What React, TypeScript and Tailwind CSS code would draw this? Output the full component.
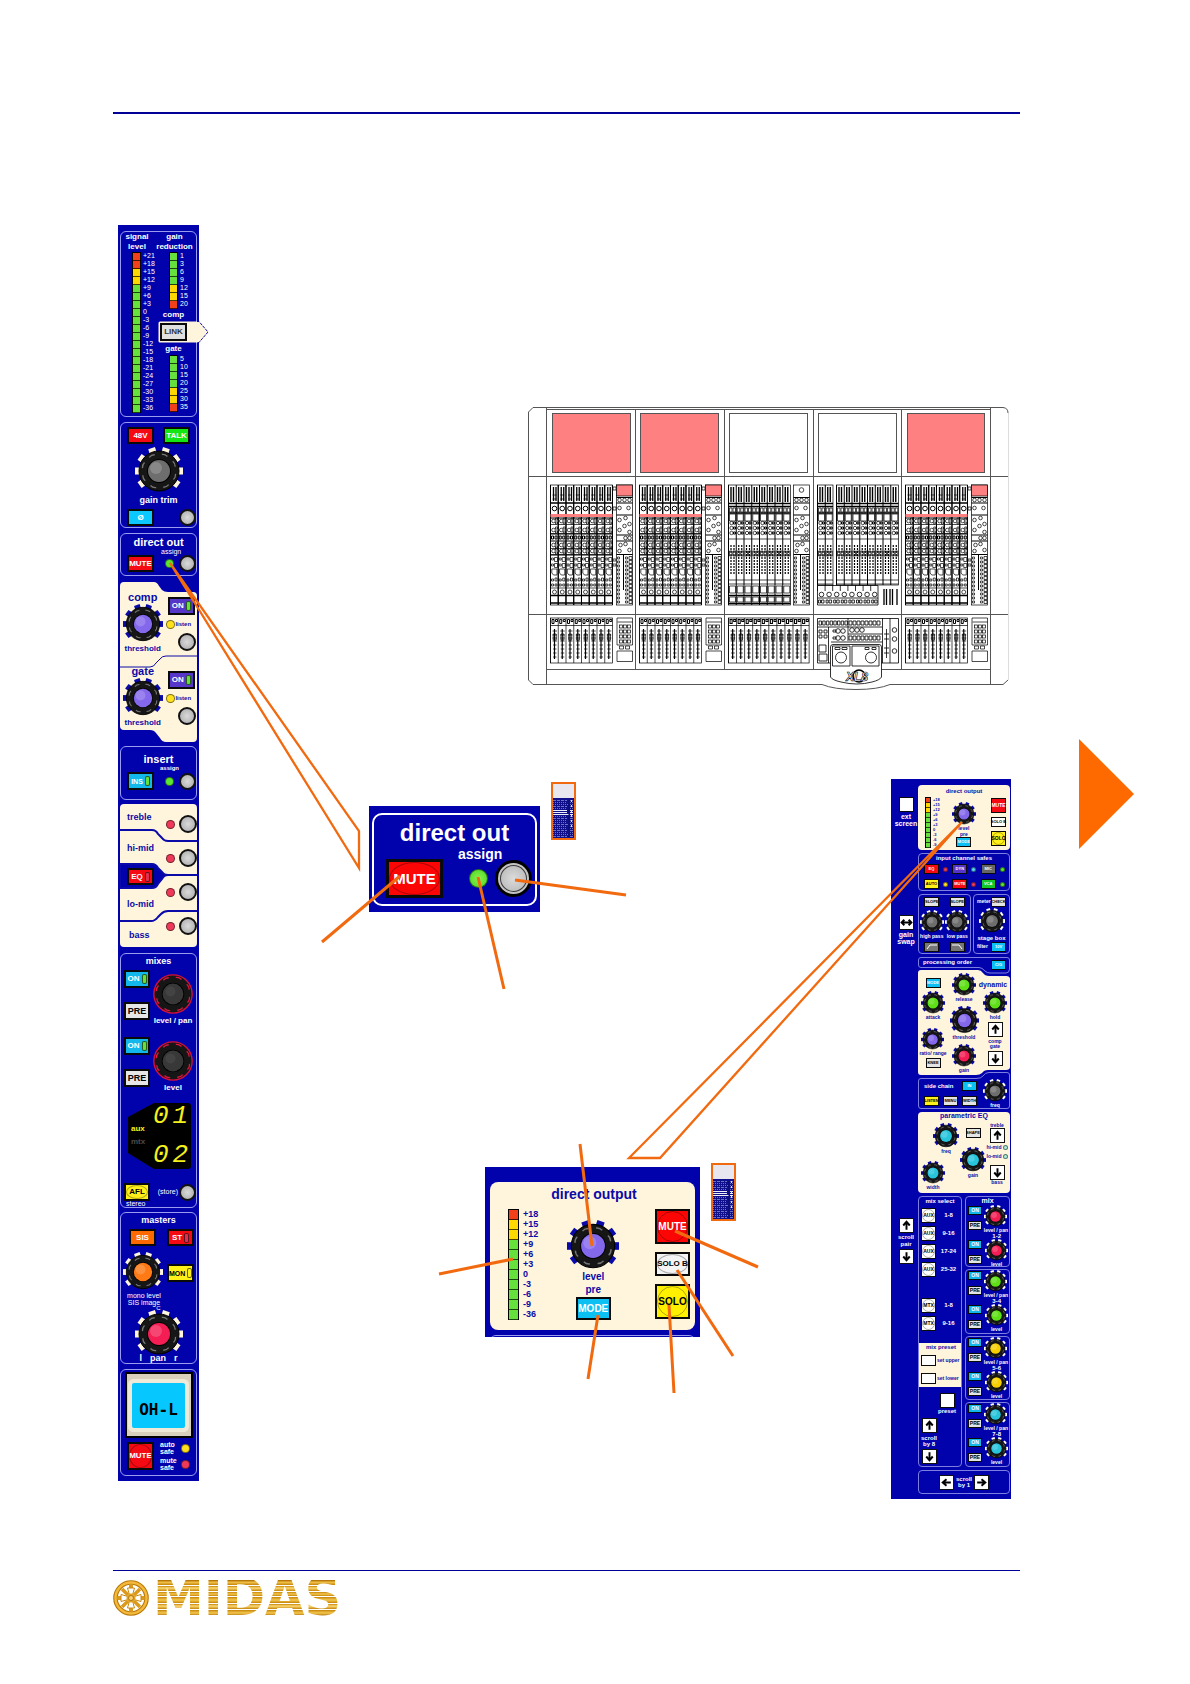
import type { ReactNode } from "react";
import clsx from "clsx";

const RED = "#f2401a";
const YELLOW = "#ffd800";
const GREEN = "#66e03c";

type MeterProps = { labels: string[]; reds: number; yellows: number; flip?: boolean; size?: "sm" | "md" | "xs" };

function Meter({ labels, reds, yellows, flip = false, size = "sm" }: MeterProps) {
  const segment = (i: number) => {
    const n = flip ? labels.length - 1 - i : i;
    if (n < reds) return RED;
    return n < reds + yellows ? YELLOW : GREEN;
  };
  return (
    <div className={clsx("flex", size === "md" ? "gap-1" : "gap-[2px]")}>
      <div className={clsx("flex shrink-0 flex-col bg-black px-px pt-px", size === "sm" && "w-[9px]", size === "md" && "w-[11px]", size === "xs" && "w-[6px]")}>
        {labels.map((l, i) => (
          <span
            key={l}
            style={{ backgroundColor: segment(i) }}
            className={clsx("block border-b border-black/70", size === "sm" && "h-2", size === "md" && "h-[10px]", size === "xs" && "h-[5px] border-black/40")}
          />
        ))}
      </div>
      <div className={clsx(size === "sm" && "text-[7px] leading-[8px]", size === "md" && "text-[9px] leading-[10px] font-bold", size === "xs" && "text-[4px] leading-[5px] font-bold")}>
        {labels.map((l) => (
          <div key={l}>{l}</div>
        ))}
      </div>
    </div>
  );
}

type KnobProps = { cap: string; tick?: string; red?: boolean; className: string };

function Knob({ cap, tick = "#fff5dc", red = false, className }: KnobProps) {
  return (
    <svg viewBox="-24 -24 48 48" className={clsx("shrink-0", className)}>
      {!red &&
        [-126, -90, -54, -18, 18, 54, 90, 126].map((a) => (
          <rect key={a} x="-3.5" y="-24" width="7" height="6" fill={tick} transform={`rotate(${a})`} />
        ))}
      <circle r={red ? 23 : 20} fill="#161616" stroke={red ? "#d8103c" : "#000"} strokeWidth={red ? 1.6 : 1} />
      {[0, 45, 90, 135, 180, 225, 270, 315].map((a) => (
        <path key={a} d="M-3 -16.5 Q0 -18 3 -16.5" fill="none" stroke={red ? "#e01840" : "#777"} strokeWidth="1.3" transform={`rotate(${a + 20}) ${red ? "scale(1.2)" : ""}`} />
      ))}
      <circle r={red ? 13.5 : 12} fill="#000" />
      <circle r={red ? 12.5 : 11} fill={cap} />
      <circle cx="-3" cy="-3" r="6" fill="#fff" opacity={red ? 0.06 : 0.18} />
    </svg>
  );
}

type BtnProps = { children?: ReactNode; label?: string; ring?: boolean; led?: string; className: string };

function Btn({ children, label, ring = false, led, className }: BtnProps) {
  return (
    <button
      type="button"
      aria-label={label}
      className={clsx("relative flex shrink-0 items-center justify-center gap-[2px] border-[#0a0a0a] font-bold leading-none whitespace-nowrap", className)}
    >
      {ring && <span className="absolute inset-0 rounded-[50%] border border-black/30" />}
      <span>{children}</span>
      {led && <span style={{ backgroundColor: led }} className="block h-[10px] w-[5px] rounded-xs border border-black/60" />}
    </button>
  );
}

function Round({ label, className = "size-[17px] border-2" }: { label: string; className?: string }) {
  return (
    <button type="button" aria-label={label} className={clsx("shrink-0 rounded-full border-[#111] bg-radial from-[#dadada] to-[#a8a8a8]", className)} />
  );
}

function Led({ className }: { className: string }) {
  return <span className={clsx("block shrink-0 rounded-full border border-black/50", className)} />;
}

const CARD = "rounded-md border border-[#9a9cf0]";
const KEY = "h-[17px] w-[27px] border-2 text-[8px]";

/* ---------- input channel strip ---------- */

function Dynamics({ title }: { title: string }) {
  return (
    <div className="flex h-[74px]">
      <div className="flex w-[46px] flex-col items-center">
        <span className="text-[11px] leading-[14px] font-bold">{title}</span>
        <Knob cap="#8468ec" tick="#0a0aa8" className="size-10" />
        <span className="text-[8px] leading-[10px] font-bold">threshold</span>
      </div>
      <div className="flex w-8 flex-col items-center pt-[7px]">
        <Btn led={GREEN} className="h-[18px] w-[27px] border-2 bg-[#5636c8] text-[8px] text-white">ON</Btn>
        <div className="flex h-[18px] w-full items-center pl-px">
          <Led className="size-[9px] bg-[#ffe11e]" />
          <span className="text-[6px] font-bold">listen</span>
        </div>
        <div className="flex w-full justify-end pr-px">
          <Round label={`${title} listen`} className="size-[18px] border-2" />
        </div>
      </div>
    </div>
  );
}

function SendKnob({ label }: { label: string }) {
  return (
    <div className="flex h-[67px] pl-[3px] text-white">
      <div className="flex flex-col gap-[14px]">
        <Btn led={GREEN} className="h-[18px] w-[26px] border-2 bg-[#12b8ec] text-[8px]">ON</Btn>
        <Btn className="h-[18px] w-[26px] border-2 bg-[#e6e6e6] text-[9px] text-black">PRE</Btn>
      </div>
      <div className="flex w-[49px] flex-col items-center pt-1">
        <Knob red cap="#383838" className="size-10" />
        <span className="pt-[2px] text-[8px] leading-[10px] font-bold whitespace-nowrap">{label}</span>
      </div>
    </div>
  );
}

function ChannelStrip() {
  return (
    <section aria-label="Input channel strip" className="ml-[5px] flex w-[81px] shrink-0 flex-col self-start bg-[#0202ac] px-[2px] pt-[6px] pb-[5px] text-white">
      <div className={clsx(CARD, "flex h-[186px]")}>
        <div className="w-8">
          <p className="text-center text-[8px] leading-[10px] font-bold">signal<br />level</p>
          <div className="pl-[11px]">
            <Meter reds={2} yellows={2} labels={["+21", "+18", "+15", "+12", "+9", "+6", "+3", "0", "-3", "-6", "-9", "-12", "-15", "-18", "-21", "-24", "-27", "-30", "-33", "-36"]} />
          </div>
        </div>
        <div className="w-11">
          <p className="text-center text-[8px] leading-[10px] font-bold">gain<br />reduction</p>
          <div className="pl-4">
            <Meter flip reds={1} yellows={2} labels={["1", "3", "6", "9", "12", "15", "20"]} />
          </div>
          <p className="pr-[2px] text-center text-[8px] leading-3 font-bold">comp</p>
          <div className="relative h-[22px] pt-[2px] pl-[7px]">
            <svg viewBox="0 0 51 22" className="absolute top-0 left-[5px] h-[22px] w-[51px]">
              <path d="M2 0.5 H41 L50 11 L41 21.5 H2 Q0.5 21.5 0.5 20 V2 Q0.5 0.5 2 0.5Z" fill="#fff5dc" />
              <path d="M39 0.5 H41 L50 11 L41 21.5 H39" fill="none" stroke="#0a0aa8" strokeDasharray="3 1" />
            </svg>
            <Btn className="h-[18px] w-[27px] border-2 bg-[#e0e0e0] text-[8px] text-[#333]">LINK</Btn>
          </div>
          <p className="pr-[2px] text-center text-[8px] leading-3 font-bold">gate</p>
          <div className="pl-4">
            <Meter flip reds={1} yellows={2} labels={["5", "10", "15", "20", "25", "30", "35"]} />
          </div>
        </div>
      </div>

      <div className={clsx(CARD, "mt-[5px] flex h-[106px] flex-col items-center pt-1")}>
        <div className="flex w-full justify-between px-[6px]">
          <Btn className={clsx(KEY, "bg-[#f50a14]")}>48V</Btn>
          <Btn className={clsx(KEY, "bg-[#14e614]")}>TALK</Btn>
        </div>
        <Knob cap="#6e6e6e" className="mt-[3px] size-12" />
        <span className="text-[9px] leading-[10px] font-bold">gain trim</span>
        <div className="flex w-full justify-between pt-1 pl-[6px]">
          <Btn className={clsx(KEY, "bg-[#0cc8ff]")}>Ø</Btn>
          <Round label="gain trim select" />
        </div>
      </div>

      <div className={clsx(CARD, "mt-[5px] h-[43px]")}>
        <p className="pt-[2px] text-center text-[11px] leading-3 font-bold">direct out</p>
        <p className="pl-10 text-[7px] leading-[7px]">assign</p>
        <div className="flex items-center pl-[6px]">
          <Btn className={clsx(KEY, "bg-[#f50a14]")}>MUTE</Btn>
          <Led className="ml-[11px] size-[9px] bg-[#5ce632]" />
          <Round label="direct out assign" className="ml-auto size-[17px] border-2" />
        </div>
      </div>

      <div className="relative mt-[6px] h-[160px] pt-2 text-[#0a0aa8]">
        <svg viewBox="0 0 77 160" className="absolute inset-0 size-full">
          <path d="M0 4 Q0 0 4 0 H34 Q37 0 39 4 L42 8 Q44 10 48 10 H73 Q77 10 77 14 V156 Q77 160 73 160 H46 Q42 160 40 156 L36 151 Q34 148 30 148 H4 Q0 148 0 144Z" fill="#fff5dc" />
          <path d="M0 85 H30 Q34 85 36 81 L40 77 Q42 74 46 74 H77" fill="none" stroke="#0a0aa8" />
        </svg>
        <div className="relative">
          <Dynamics title="comp" />
          <Dynamics title="gate" />
        </div>
      </div>

      <div className={clsx(CARD, "mt-1 h-[54px]")}>
        <p className="pt-[6px] text-center text-[11px] leading-3 font-bold">insert</p>
        <p className="pl-[39px] text-[6px] leading-[7px] font-bold">assign</p>
        <div className="flex items-center pl-[6px]">
          <Btn led={GREEN} className="h-[18px] w-[27px] border-2 bg-[#12b8ec] text-[7px]">INS</Btn>
          <Led className="ml-[11px] size-[9px] bg-[#5ce632]" />
          <Round label="insert assign" className="ml-auto size-[17px] border-2" />
        </div>
      </div>

      <div className="relative mt-1 h-[143px] text-[9px] font-bold text-[#0a0aa8]">
        <svg viewBox="0 0 77 143" className="absolute inset-0 size-full">
          <rect width="77" height="143" rx="4" fill="#fff5dc" />
          <g fill="none" stroke="#0a0aa8" strokeWidth="2">
            <path d="M0 26 H32 Q36 26 38 30 L42 34 Q44 37 48 37 H77" />
            <path d="M0 117 H31 Q35 117 38 113 L41 110 Q44 107 48 107 H77" />
            <path d="M0 60 H32 Q36 60 38 64 L42 68 Q44 71 48 71 H77 H48 Q44 71 42 75 L38 80 Q36 84 32 84 H0Z" fill="#0202ac" />
          </g>
        </svg>
        <div className="relative flex">
          <div className="flex w-[46px] flex-col pl-[7px]">
            <span className="h-7 leading-[26px]">treble</span>
            <span className="h-9 leading-8">hi-mid</span>
            <Btn led="#e03050" className={clsx(KEY, "bg-[#f50a14] text-white")}>EQ</Btn>
            <span className="h-9 leading-[38px]">lo-mid</span>
            <span className="h-6 pl-[2px] leading-7">bass</span>
          </div>
          <div className="flex flex-col gap-4 pt-[11px]">
            {["treble", "hi-mid", "lo-mid", "bass"].map((band) => (
              <div key={band} className="flex items-center gap-1">
                <Led className="size-[9px] bg-[#ee3a58]" />
                <Round label={band} className="size-[18px] border-2" />
              </div>
            ))}
          </div>
        </div>
      </div>

      <div className={clsx(CARD, "mt-[6px] h-[255px]")}>
        <p className="pt-px pb-[3px] text-center text-[9px] leading-3 font-bold">mixes</p>
        <SendKnob label="level / pan" />
        <SendKnob label="level" />
        <div className="relative -mt-px ml-[7px] h-[67px] w-16">
          <svg viewBox="0 0 64 67" className="absolute inset-0 size-full">
            <path d="M26 0 H60 Q63 0 63 3 V63 Q63 66 60 66 H26 L0 50 V14Z" fill="#000" />
          </svg>
          <div className="relative flex font-bold">
            <div className="w-[25px] pt-[19px] pl-[3px] text-[8px] leading-[13px]">
              <p className="text-[#f4f01c]">aux</p>
              <p className="text-[#4a4a4a]">mtx</p>
            </div>
            <div className="font-['Liberation_Mono',monospace] text-[26px] leading-[26px] font-normal text-[#f4f01c] italic">
              <p className="flex h-[39px] gap-1"><span>0</span><span>1</span></p>
              <p className="flex gap-1"><span>0</span><span>2</span></p>
            </div>
          </div>
        </div>
        <div className="mt-[13px] flex items-center pl-[3px]">
          <Btn ring className="h-[18px] w-[26px] border-2 bg-[#fff01a] text-[8px] text-black">AFL</Btn>
          <span className="ml-auto pr-px text-[7px]">(store)</span>
          <Round label="store" />
        </div>
        <p className="pl-[5px] text-[7px] leading-[6px]">stereo</p>
      </div>

      <div className={clsx(CARD, "mt-1 h-[152px]")}>
        <p className="pt-px text-center text-[9px] leading-3 font-bold">masters</p>
        <div className="flex justify-between pt-[3px] pr-[2px] pl-2">
          <Btn className={clsx(KEY, "bg-[#ff6a00]")}>SIS</Btn>
          <Btn led="#e03050" className={clsx(KEY, "bg-[#f50a14]")}>ST</Btn>
        </div>
        <div className="flex items-start justify-between pt-[6px] pr-[2px] pl-[2px]">
          <Knob cap="#ff7a14" className="size-10" />
          <Btn led="#fff01a" className="mt-3 h-[18px] w-[27px] border-2 bg-[#fff01a] text-[7px] text-black">MON</Btn>
        </div>
        <p className="w-[46px] text-center text-[7px] leading-[7px] whitespace-nowrap">mono level<br />SIS image</p>
        <p className="text-center text-[6px] leading-[4px]">C</p>
        <Knob cap="#f41e54" className="mx-auto size-12" />
        <p className="-mt-[5px] flex justify-center gap-2 text-[9px] leading-[10px] font-bold">
          <span>l</span><span>pan</span><span>r</span>
        </p>
      </div>

      <div className={clsx(CARD, "mt-[5px] h-[107px] pt-[3px]")}>
        <div className="mx-auto flex h-16 w-[66px] items-center justify-center border border-black bg-[#d8d0bc] outline-1 outline-black">
          <span className="flex h-[45px] w-[53px] items-end justify-center rounded-xs bg-[#06c8ff] pb-2 font-['DejaVu_Sans_Mono',monospace] text-[16px] leading-5 font-bold text-black ring-4 ring-[#efe9d8]">OH-L</span>
        </div>
        <div className="flex items-center pt-1 pl-[6px]">
          <Btn ring className="h-7 w-[27px] border-2 bg-[#f50a14] text-[8px]">MUTE</Btn>
          <div className="w-6 pl-[6px] text-[7px] leading-[7px] font-bold">
            <p>auto<br />safe</p>
            <p className="pt-[2px]">mute<br />safe</p>
          </div>
          <div className="flex flex-col gap-[7px] pl-[3px]">
            <Led className="size-[9px] bg-[#ffe11e]" />
            <Led className="size-[9px] bg-[#ee3a58]" />
          </div>
        </div>
      </div>
    </section>
  );
}

/* ---------- enlarged panels ---------- */

function DirectOutPanel() {
  return (
    <section aria-label="direct out" className="mt-[27px] h-[106px] w-[171px] bg-[#0202ac] px-[3px] pt-[7px] text-white">
      <div className="h-[93px] rounded-[10px] border-2 border-white">
        <h2 className="pt-[6px] text-center text-[24px] leading-6 font-bold">direct out</h2>
        <p className="pl-21 text-[14px] leading-[19px] font-bold">assign</p>
        <div className="-mt-[5px] flex items-center pl-3">
          <Btn ring className="h-[39px] w-[57px] border-3 bg-[#fb0505] text-[15px]">MUTE</Btn>
          <Led className="ml-[26px] size-[19px] bg-radial from-[#8cf04c] to-[#3cd820]" />
          <button type="button" aria-label="assign" className="ml-[7px] size-[37px] rounded-full border-3 border-black bg-[#c4c4c4] p-[2px]">
            <span className="block size-full rounded-full border border-black/70 bg-radial from-[#dcdcdc] to-[#b4b4b4]" />
          </button>
        </div>
      </div>
    </section>
  );
}

function DirectOutputPanel() {
  return (
    <section aria-label="direct output" className="mt-1 h-[170px] w-[215px] overflow-hidden bg-[#0202ac] px-[5px] pt-[15px] text-[#0a0aa8]">
      <div className="h-[148px] rounded-lg bg-[#fff5dc]">
        <h2 className="pt-1 pl-[3px] text-center text-[14px] leading-4 font-bold">direct output</h2>
        <div className="flex pt-[7px] pl-[18px]">
          <Meter size="md" reds={1} yellows={2} labels={["+18", "+15", "+12", "+9", "+6", "+3", "0", "-3", "-6", "-9", "-36"]} />
          <div className="flex w-[86px] flex-col items-center pt-[11px] pl-6">
            <Knob cap="#8468ec" tick="#0a0aa8" className="size-[52px]" />
            <span className="text-[10px] leading-[10px] font-bold">level</span>
            <span className="text-[10px] leading-[15px] font-bold">pre</span>
            <Btn className="h-[23px] w-[35px] border-2 bg-[#0cc0f4] text-[10px] text-white">MODE</Btn>
          </div>
          <div className="ml-auto flex flex-col gap-2 pr-[5px]">
            <Btn ring className="size-[35px] border-2 bg-[#fb0505] text-[10px] text-white">MUTE</Btn>
            <Btn ring className="h-6 w-[35px] border-2 bg-[#f4f4f4] text-[8px] text-black">SOLO B</Btn>
            <Btn ring className="size-[35px] border-2 bg-[#fff000] text-[10px] text-black">SOLO</Btn>
          </div>
        </div>
      </div>
      <div className="mt-[5px] h-[6px] rounded-t-lg border-t border-[#9a9cf0]" />
    </section>
  );
}

function Locator() {
  const rows = Array.from({ length: 19 }, (_, i) => i);
  return (
    <svg viewBox="0 0 25 58" className="h-[58px] w-[25px] shrink-0">
      <rect width="25" height="58" fill="#f26a10" />
      <rect x="2" y="2" width="21" height="14" fill="#e8e6ee" />
      <rect x="2" y="16" width="21" height="40" fill="#10108c" />
      {rows.map((i) => (
        <path
          key={i}
          d={`M2 ${18.5 + i * 2} H${i % 5 === 2 ? 18 : 16} M19 ${18.5 + i * 2} H22`}
          stroke={i > 4 && i < 8 ? "#f0f0fa" : "#6a72c4"}
          strokeDasharray={i > 4 && i < 8 ? undefined : i % 3 ? "1 1" : "3 1"}
          strokeWidth="1"
        />
      ))}
      <path d="M18 18 V55" stroke="#0a0a70" />
      <path d="M20.5 18 V48" stroke="#d8dcf4" strokeDasharray="2 3" />
    </svg>
  );
}

/* ---------- output strip ---------- */

const MINI = "h-[10px] w-[15px] border text-[4px]";
const WHITE_KEY = "size-[15px] border bg-white text-[5px] text-black";

function ArrowKey({ dir }: { dir: "up" | "down" | "left" | "right" | "both" }) {
  const paths = {
    up: "M6 10 V3 M3 6 L6 2.5 L9 6",
    down: "M6 2 V9 M3 6 L6 9.5 L9 6",
    left: "M10 6 H3 M6 3 L2.5 6 L6 9",
    right: "M2 6 H9 M6 3 L9.5 6 L6 9",
    both: "M2 6 H10 M4 3.5 L1.5 6 L4 8.5 M8 3.5 L10.5 6 L8 8.5",
  };
  return (
    <button type="button" aria-label={dir} className="size-[15px] shrink-0 border border-[#111] bg-white">
      <svg viewBox="0 0 12 12" className="size-full" fill="none" stroke="#000" strokeWidth="1.8">
        <path d={paths[dir]} />
      </svg>
    </button>
  );
}

function MiniKnob({ cap, label, tick = "#0a0aa8", size = "size-6" }: { cap: string; label: string; tick?: string; size?: string }) {
  return (
    <div className="flex flex-col items-center">
      <Knob cap={cap} tick={tick} className={size} />
      <span className="text-[5px] leading-[5px] font-bold whitespace-nowrap">{label}</span>
    </div>
  );
}

function MixPair({ cap, title, first = false }: { cap: string; title: string; first?: boolean }) {
  const row = (label: string) => (
    <div className="flex justify-between pr-px pl-[2px]">
      <div className="flex flex-col gap-[6px] pt-px">
        <Btn className="h-[9px] w-[14px] border bg-[#12b8ec] text-[5px]">ON</Btn>
        <Btn className="h-[9px] w-[14px] border bg-[#e4e4e4] text-[5px] text-black">PRE</Btn>
      </div>
      <MiniKnob cap={cap} tick="#fff" label={label} size="size-[23px]" />
    </div>
  );
  return (
    <div className={clsx("rounded-sm border border-[#7c7ee0]", first ? "h-[71px]" : "h-[65px]")}>
      {first && <p className="text-center text-[7px] leading-2 font-bold">mix</p>}
      {row("level / pan")}
      <p className="pr-2 text-right text-[6px] leading-[6px] font-bold">{title}</p>
      {row("level")}
    </div>
  );
}

function Safe({ text, bg, led }: { text: string; bg: string; led: string }) {
  return (
    <div className="flex items-center gap-1">
      <Btn className={clsx(MINI, bg)}>{text}</Btn>
      <Led className={clsx("size-[5px]", led)} />
    </div>
  );
}

function OutputStrip() {
  return (
    <section aria-label="Output strip" className="mr-[9px] flex h-[720px] w-[120px] shrink-0 bg-[#0202ac] text-white">
      <div className="flex w-[27px] flex-col items-center pt-[18px] pl-[3px] text-center text-[7px] leading-[7px] font-bold">
        <Btn label="ext screen" className={WHITE_KEY} />
        <p className="pt-px">ext<br />screen</p>
        <div className="h-[88px]" />
        <ArrowKey dir="both" />
        <p className="pt-px">gain<br />swap</p>
        <div className="h-[273px]" />
        <ArrowKey dir="up" />
        <p className="py-px text-[6px]">scroll<br />pair</p>
        <ArrowKey dir="down" />
      </div>

      <div className="flex w-[92px] flex-col gap-[3px] pt-[6px]">
        <div className="h-[65px] rounded-sm bg-[#fff5dc] text-[#0a0aa8]">
          <p className="pt-[2px] text-center text-[6px] leading-2 font-bold">direct output</p>
          <div className="flex pt-[2px] pl-[7px]">
            <Meter size="xs" reds={1} yellows={2} labels={["+18", "+15", "+12", "+9", "+6", "+3", "0", "-3", "-6", "-9"]} />
            <div className="flex w-9 flex-col items-center pt-[5px] pl-3">
              <MiniKnob cap="#8468ec" label="level" />
              <span className="text-[5px] leading-[6px] font-bold">pre</span>
              <Btn className={clsx(MINI, "bg-[#0cc0f4] text-white")}>MODE</Btn>
            </div>
            <div className="ml-auto flex flex-col gap-1 pt-px pr-1">
              <Btn className="size-[15px] border bg-[#f50a14] text-[5px] text-white">MUTE</Btn>
              <Btn className={clsx(MINI, "bg-white text-black")}>SOLO B</Btn>
              <Btn ring className="size-[15px] border bg-[#fff01a] text-[5px] text-black">SOLO</Btn>
            </div>
          </div>
        </div>

        <div className="h-[38px] rounded-sm border border-[#7c7ee0]">
          <p className="text-center text-[6px] leading-[9px] font-bold">input channel safes</p>
          <div className="grid grid-cols-3 gap-y-[5px] pt-px pl-[5px]">
            <Safe text="EQ" bg="bg-[#f50a14]" led="bg-[#ee3a58]" />
            <Safe text="DYN" bg="bg-[#5636c8]" led="bg-[#5ad8f8]" />
            <Safe text="MIC" bg="bg-[#666]" led="bg-[#5ce632]" />
            <Safe text="AUTO" bg="bg-[#fff01a] text-black" led="bg-[#ffe11e]" />
            <Safe text="MUTE" bg="bg-[#f50a14]" led="bg-[#ee3a58]" />
            <Safe text="VCA" bg="bg-[#14c828]" led="bg-[#5ce632]" />
          </div>
        </div>

        <div className="flex h-[60px] gap-[2px]">
          <div className="flex w-[53px] justify-around rounded-sm border border-[#7c7ee0] pt-[2px]">
            {["high pass", "low pass"].map((t, i) => (
              <div key={t} className="flex w-6 flex-col items-center gap-[3px]">
                <Btn className={clsx(MINI, "bg-[#e4e4e4] text-black")}>SLOPE</Btn>
                <MiniKnob cap="#6e6e6e" tick="#fff" label={t} />
                <Btn label={`${t} filter`} className={clsx(MINI, "bg-[#777]")}>
                  <svg viewBox="0 0 12 6" className="h-[6px] w-3" fill="none" stroke="#fff">
                    <path d={i === 0 ? "M1 5 L4 1 H11" : "M1 1 H8 L11 5"} />
                  </svg>
                </Btn>
              </div>
            ))}
          </div>
          <div className="flex w-[37px] flex-col items-center rounded-sm border border-[#7c7ee0] pt-[2px] text-[5px] font-bold">
            <div className="flex w-full items-center justify-between pr-[3px] pl-[3px]">
              meter<Btn className={clsx(MINI, "bg-[#e4e4e4] text-black")}>CHECK</Btn>
            </div>
            <Knob cap="#6e6e6e" tick="#fff" className="mt-px size-[26px]" />
            <span className="text-[6px] leading-[8px] whitespace-nowrap">stage box</span>
            <div className="flex w-full items-center justify-between pr-[3px] pl-[3px]">
              filter<Btn className={clsx(MINI, "bg-[#0cc0f4]")}>10V</Btn>
            </div>
          </div>
        </div>

        <div className="relative h-[152px]">
          <svg viewBox="0 0 92 152" className="absolute inset-0 size-full">
            <path d="M3 0.5 H89 Q91.5 0.5 91.5 3 V12 Q91.5 16 88 16 H72 Q69 16 67 14 Q64 10.5 61 10.5 H3 Q0.5 10.5 0.5 8 V3 Q0.5 0.5 3 0.5Z" fill="none" stroke="#7c7ee0" />
            <path d="M3 13 H60 Q63 13 65 16 Q67 19 71 19 H88 Q92 19 92 22 V110 Q92 113 88 113 H70 Q66 113 64 116 Q62 118 58 118 H3 Q0 118 0 115 V16 Q0 13 3 13Z" fill="#fff5dc" />
            <path d="M3 121.5 H58 Q63 121.5 65 119 Q67 115.5 71 115.5 H89 Q91.5 115.5 91.5 118 V149 Q91.5 151.5 89 151.5 H3 Q0.5 151.5 0.5 149 V124 Q0.5 121.5 3 121.5Z" fill="none" stroke="#7c7ee0" />
          </svg>
          <div className="relative flex h-[13px] items-start justify-between pr-1 pl-[5px] text-[6px] leading-[11px] font-bold">
            processing order
            <Btn className={clsx(MINI, "mt-[3px] bg-[#0cc0f4]")}>C/G</Btn>
          </div>
          <div className="relative flex h-[105px] justify-between px-px text-[#0a0aa8]">
            <div className="flex w-7 flex-col items-center pt-2">
              <Btn className={clsx(MINI, "bg-[#0cc0f4] text-white")}>MODE</Btn>
              <div className="h-[3px]" />
              <MiniKnob cap="#5fe016" label="attack" />
              <div className="h-2" />
              <MiniKnob cap="#8468ec" label="ratio/ range" size="size-[23px]" />
              <Btn className={clsx(MINI, "mt-[2px] bg-[#e4e4e4] text-black")}>KNEE</Btn>
            </div>
            <div className="flex w-7 flex-col items-center gap-1 pt-[3px]">
              <MiniKnob cap="#5fe016" label="release" />
              <MiniKnob cap="#8468ec" label="threshold" size="size-[29px]" />
              <MiniKnob cap="#f41e54" label="gain" />
            </div>
            <div className="flex w-7 flex-col items-center pt-[11px] text-[5px] leading-[5px] font-bold">
              <span className="pr-1 text-[7px] leading-2">dynamic</span>
              <div className="h-[2px]" />
              <MiniKnob cap="#5fe016" label="hold" />
              <div className="h-[2px]" />
              <ArrowKey dir="up" />
              <p className="py-[2px] text-center">comp<br />gate</p>
              <ArrowKey dir="down" />
            </div>
          </div>
          <div className="relative flex justify-between pt-1 pr-[3px] pl-[6px] text-[6px] font-bold">
            <div>
              <div className="flex items-center justify-between pt-[2px]">
                side chain<Btn className={clsx(MINI, "bg-[#0cc0f4]")}>IN</Btn>
              </div>
              <div className="flex gap-1 pt-[5px]">
                <Btn className={clsx(MINI, "bg-[#fff01a] text-black")}>LISTEN</Btn>
                <Btn className={clsx(MINI, "bg-[#e4e4e4] text-black")}>MENU</Btn>
                <Btn className={clsx(MINI, "bg-[#e4e4e4] text-black")}>WIDTH</Btn>
              </div>
            </div>
            <MiniKnob cap="#6e6e6e" tick="#fff" label="freq" />
          </div>
        </div>

        <div className="h-[81px] rounded-sm bg-[#fff5dc] text-[#0a0aa8]">
          <p className="text-center text-[7px] leading-2 font-bold">parametric EQ</p>
          <div className="flex justify-between px-[3px]">
            <div className="flex w-[38px] flex-col justify-between pt-[3px]">
              <div className="self-end"><MiniKnob cap="#28c4dc" label="freq" size="size-[26px]" /></div>
              <div className="self-start pt-[7px]"><MiniKnob cap="#28c4dc" label="width" /></div>
            </div>
            <div className="flex flex-col items-center gap-[9px] pt-2">
              <Btn className={clsx(MINI, "bg-[#e4e4e4] text-black")}>SHAPE</Btn>
              <MiniKnob cap="#28c4dc" label="gain" size="size-[26px]" />
            </div>
            <div className="flex w-5 flex-col items-center pt-[3px] text-[5px] leading-[5px] font-bold">
              treble
              <ArrowKey dir="up" />
              {["hi-mid", "lo-mid"].map((t) => (
                <span key={t} className="flex h-[9px] items-center gap-px whitespace-nowrap">
                  {t}<Led className="size-[5px] bg-[#a8f0e0]" />
                </span>
              ))}
              <div className="h-1" />
              <ArrowKey dir="down" />
              bass
            </div>
          </div>
        </div>

        <div className="flex h-[271px] gap-[3px]">
          <div className="w-11 rounded-sm border border-[#7c7ee0] text-[6px] font-bold">
            <p className="pb-[3px] text-center leading-2">mix select</p>
            <div className="flex flex-col gap-[3px] pl-[2px]">
              {["1-8", "9-16", "17-24", "25-32"].map((t) => (
                <div key={t} className="flex items-center">
                  <Btn ring className={WHITE_KEY}>AUX</Btn>
                  <span className="flex-1 text-center">{t}</span>
                </div>
              ))}
              <div className="h-[15px]" />
              {["1-8", "9-16"].map((t) => (
                <div key={t} className="flex items-center">
                  <Btn ring className={WHITE_KEY}>MTX</Btn>
                  <span className="flex-1 text-center">{t}</span>
                </div>
              ))}
            </div>
            <div className="mt-3 flex h-11 flex-col gap-[7px] bg-[#fff5dc] pl-[2px] text-[5px] text-[#0a0aa8]">
              <p className="-mb-1 text-center text-[6px] leading-[9px]">mix preset</p>
              {["set upper", "set lower"].map((t) => (
                <div key={t} className="flex items-center gap-px whitespace-nowrap">
                  <Btn label={t} className="h-[11px] w-[15px] border bg-white" />{t}
                </div>
              ))}
            </div>
            <div className="flex flex-col items-center pt-[6px] pl-[14px]">
              <Btn label="preset" className={WHITE_KEY} />
              <span className="leading-[7px]">preset</span>
            </div>
            <div className="flex w-5 flex-col items-center pt-[3px] text-center leading-[6px]">
              <ArrowKey dir="up" />
              <p className="py-[2px]">scroll<br /><span className="whitespace-nowrap">by 8</span></p>
              <ArrowKey dir="down" />
            </div>
          </div>
          <div className="flex w-[45px] flex-col gap-[2px]">
            <MixPair first cap="#f41e54" title="1-2" />
            <MixPair cap="#5fe016" title="3-4" />
            <MixPair cap="#f8d000" title="5-6" />
            <MixPair cap="#28c4dc" title="7-8" />
          </div>
        </div>

        <div className="flex h-6 items-center justify-center gap-[2px] rounded-sm border border-[#7c7ee0] text-center text-[6px] leading-[6px] font-bold">
          <ArrowKey dir="left" />
          <p>scroll<br />by 1</p>
          <ArrowKey dir="right" />
        </div>
      </div>
    </section>
  );
}

/* ---------- console overview drawing ---------- */

const range = (n: number) => Array.from({ length: n }, (_, i) => i);

function InputBay({ x }: { x: number }) {
  return (
    <g transform={`translate(${x} 0)`} fill="none" stroke="#000" strokeWidth="0.7">
      <rect x="0" y="485" width="62" height="120" />
      {range(8).map((i) => (
        <g key={i} transform={`translate(${i * 7.75} 0)`}>
          <path d="M0 485 V605 M7.7 485 V605" strokeWidth="1" />
          <path d="M3 487 V501 M5.5 487 V501" strokeWidth="1.3" />
          <path d="M2 495 H6 M2 499 H6" />
          <circle cx="4" cy="508.5" r="2.3" strokeWidth="1" />
          {[521, 530, 545, 551].map((y) => (
            <g key={y}>
              <circle cx="3" cy={y} r="1.8" />
              <path d={`M5 ${y - 3} h2 v2 h-2z M5 ${y + 1} h2 v2 h-2z M0 ${y + 3.5} h7`} />
            </g>
          ))}
          <path d="M1 536 h2 v3 h-2z M4.5 536 h2 v3 h-2z M0 555 H7.7" strokeWidth="1" />
          {[559, 565].map((y) => (
            <path key={y} d={`M1 ${y - 1} h2 v2 h-2z M4 ${y - 1.5} h3 v4 h-3z`} />
          ))}
          <path d="M1.3 569 H6.5 V575 H3 L1.3 573Z" />
          <path d="M1 579 h2 v2 h-2z M4.5 578 h2 v3 h-2z M1 584 h2 v2 h-2z M4.5 584 h2 v2 h-2z M0 588 H7.7" />
          <circle cx="4" cy="592" r="2" />
          <path d="M0 595.5 H7.7 M0 603 H7.7" strokeWidth="1.3" />
        </g>
      ))}
      <path d="M0 503 H62" strokeWidth="1.6" />
      <path d="M0 515.5 H62" stroke="#ff8080" strokeWidth="3" />
      <path d="M0 518 H62 M0 534 H62 M0 541 H62" strokeWidth="1.2" />
      <path d="M62.5 487 h3 v3 h-3z M62.5 507 h3 v3 h-3z M62.5 559 h3 v2 h-3z M62.5 564 h3 v2 h-3z" />
      <SideBay x={66} pink />
      <LowerFaders />
      <path d="M66.5 618 H82 V645 H66.5Z M66.5 651 H82 V661.5 H66.5Z M67 622 H82" />
      {range(4).map((r) => range(3).map((c) => <rect key={`${r}-${c}`} x={69 + c * 4} y={625 + r * 5} width="3" height="3" />))}
      <path d="M69 646 h4 v3 h-4z M75 646 h4 v3 h-4z" />
    </g>
  );
}

function SideBay({ x, pink = false }: { x: number; pink?: boolean }) {
  return (
    <g transform={`translate(${x} 0)`} fill="none" stroke="#000" strokeWidth="0.7">
      <rect x="0" y="485" width="16" height="120" />
      {pink ? <rect x="0" y="485" width="16" height="11" fill="#ff8080" /> : <circle cx="8" cy="490" r="2.3" />}
      <path d="M0 497.5 H16 M0 503 H16 M0 515 H16 M0 535 H16 M0 541 H16 M0 554.5 H16" strokeWidth="1.2" />
      {[[3, 500], [8, 500], [13, 500], [3, 508], [12, 508], [3, 520], [9, 518], [13, 524], [8, 526], [3, 530], [13, 532], [9, 538], [13, 538], [4, 545], [9, 544], [3, 551], [13, 550]].map(([cx, cy]) => (
        <circle key={`${cx}-${cy}`} cx={cx} cy={cy} r="1.8" />
      ))}
      {range(12).map((i) => (
        <path key={i} d={`M1 ${557 + i * 4} h2 v2 h-2z M9 ${557 + i * 4} h2 v2 h-2z M12.5 ${556.5 + i * 4} h3 v3 h-3z`} />
      ))}
      <path d="M7 555 V590" strokeWidth="1" />
    </g>
  );
}

function LowerFaders({ n = 8 }: { n?: number }) {
  return (
    <g fill="none" stroke="#000" strokeWidth="0.7">
      <rect x="0" y="618" width={n * 7.75} height="45" />
      <path d={`M0 625.5 H${n * 7.75}`} />
      {range(n).map((i) => (
        <g key={i} transform={`translate(${i * 7.75} 0)`}>
          <path d="M0 618 V663" />
          <path d="M1.5 619.5 h2 v4 h-2z M5 619.5 h2 v2 h-2z" strokeWidth="1" />
          <path d="M4 629 V659" strokeWidth="1.2" />
          <path d="M2 631 H6.5 M2 635 H6.5 M2 638 H6.5 M2 641 H6.5 M2.5 645 H6 M2.5 649 H6 M2.5 653 H6 M2.5 657 H6" />
          <path d="M2.7 634 h3 v6 h-3z" />
        </g>
      ))}
    </g>
  );
}

function FaderBay({ x, n, short = false }: { x: number; n: number; short?: boolean }) {
  const w = n * 7.75;
  return (
    <g transform={`translate(${x} 0)`} fill="none" stroke="#000" strokeWidth="0.7">
      <rect x="0" y="485" width={w} height={short ? 100 : 120} />
      {range(n).map((i) => (
        <g key={i} transform={`translate(${i * 7.75} 0)`}>
          <path d={`M0 485 V${short ? 585 : 605}`} strokeWidth="1" />
          <path d="M2.5 487 V502 M5 487 V502" strokeWidth="1.4" />
          <path d="M1 508 h2.5 v4 h-2.5z M4.5 508 h2.5 v4 h-2.5z M1 514 h6 v7 h-6z" />
          {[523, 528, 533].map((y) => (
            <g key={y}>
              <circle cx="3" cy={y} r="1.7" />
              <path d={`M5 ${y - 1} h2 v2 h-2z`} strokeWidth="1" />
            </g>
          ))}
          <path d="M2.5 545 V574 M5.5 545 V574" strokeWidth="1.2" strokeDasharray="2 1" />
          <path d="M1 551 h2.5 v5 h-2.5z M4.5 551 h2.5 v5 h-2.5z" />
          {!short && <path d="M1 586 h6 v7 h-6z M1 597 h6 v5 h-6z" />}
        </g>
      ))}
      <path d={`M0 503.5 H${w} M0 506.5 H${w} M0 513 H${w}`} strokeWidth="1.3" />
      <path d={`M0 539 H${w} M0 580 H${w} M0 584 H${w}`} />
      {!short && <path d={`M0 595.5 H${w} M0 603.5 H${w}`} strokeWidth="1.3" />}
    </g>
  );
}

function ConsoleDrawing() {
  return (
    <svg viewBox="527 407 482 285" role="img" aria-label="Control centre" className="mr-[11px] h-[285px] w-[482px] self-end">
      <g fill="none" stroke="#555" strokeWidth="1">
        <path d="M533 407.5 H1003 Q1008 408 1008 413 M533 407.5 L528.5 412 V680 L533 684.5 H822 Q834 689.5 856 689.5 Q878 689.5 890 684.5 H1003 L1008 680" />
        <path d="M1008.5 413 V680" stroke="#ddd" />
        <path d="M546.5 407.5 V684.5 M990.5 407.5 V684.5 M635.5 409.5 V669.5 M724.5 409.5 V669.5 M813.5 409.5 V669.5 M901.5 409.5 V669.5" />
        <path d="M546.5 409.5 H990.5 M528.5 476.5 H1008 M528.5 614.5 H1008 M546.5 669.5 H990.5" />
        <rect x="552.5" y="413.5" width="78" height="59" fill="#ff8080" />
        <rect x="640.5" y="413.5" width="78" height="59" fill="#ff8080" />
        <rect x="729.5" y="413.5" width="78" height="59" />
        <rect x="818.5" y="413.5" width="78" height="59" />
        <rect x="907.5" y="413.5" width="77" height="59" fill="#ff8080" />
      </g>
      <InputBay x={550.5} />
      <InputBay x={639.5} />
      <InputBay x={905.5} />
      <FaderBay x={728.5} n={8} />
      <SideBay x={793.5} />
      <g transform="translate(728.5 0) scale(1.04 1)">
        <LowerFaders n={10} />
      </g>
      <FaderBay x={817.5} n={2} short />
      <FaderBay x={836.5} n={8} short />
      <g fill="none" stroke="#000" strokeWidth="0.8">
        <path d="M817.5 585.5 H878 V605 H817.5Z M817.5 598 H878" />
        {range(8).map((i) => (
          <g key={i} transform={`translate(${817.5 + i * 7.6} 0)`}>
            <path d="M0 585 V591 M1 600 h2 v3 h-2z M4 600 h2.5 v3 h-2.5z" />
            <circle cx="4" cy="594.5" r="2.3" />
          </g>
        ))}
        <path d="M884 589 V605 M886.5 589 V605 M890 589 V605 M892.5 589 V605 M897 589 V605" strokeWidth="1.3" />
        <path d="M817.5 618.5 H898.5 V663 H817.5Z M817.5 627 H882 M828.5 627 V663 M848 618 V641 M882.5 618 V663 M890 618 V663 M848 634 H882 M831 642 H882" />
        {range(8).map((i) => (
          <path key={i} d={`M${819 + i * 3.7} 621 h2.5 v4 h-2.5z M${849 + i * 4} 621 h3 v4 h-3z M${849 + i * 4} 636 h3 v4 h-3z`} />
        ))}
        <path d="M819 630 h3 v3 h-3z M824 630 h3 v3 h-3z M819 635 h3 v3 h-3z M824 635 h3 v3 h-3z M819 645 h7 v7 h-7z M819 654 h8 v7 h-8z M833 630 h3 v2 h-3z M833 637 h3 v2 h-3z" />
        {[[838, 631], [843, 631], [838, 638], [843, 638], [852, 630], [857, 630], [862, 630], [894.5, 630], [894.5, 639], [894.5, 651]].map(([cx, cy]) => (
          <circle key={`${cx}-${cy}`} cx={cx} cy={cy} r="2.3" />
        ))}
        <path d="M886.5 629 V658 M884 634 h5 M884 639 h5 M884 648 h5 M884 653 h5" />
        <path d="M830.5 647 Q830.5 644.5 833 644.5 H879 Q881.5 644.5 881.5 647 V677 Q880 680 872 682 Q857 686 841 682 Q832 680 830.5 677Z" fill="#fff" />
        <path d="M832.5 646 H850 V666 H832.5Z M852 646 H879 V666 H852Z M835 647.5 h5 v2 h-5z M842 647.5 h5 v2 h-5z M865 647.5 h4 v2 h-4z M872 647.5 h4 v2 h-4z" />
        <circle cx="841" cy="657.5" r="5.5" />
        <circle cx="871" cy="657.5" r="5.5" />
        <circle cx="859" cy="676" r="6" strokeWidth="1.6" />
      </g>
      <text x="846" y="681" fontFamily="Liberation Sans, sans-serif" fontSize="12" fontWeight="700" fontStyle="italic" fill="#fff" stroke="#000" strokeWidth="0.6">XL8</text>
    </svg>
  );
}

/* ---------- leader lines over the figure ---------- */

function Leaders() {
  return (
    <svg viewBox="113 225 907 1274" className="pointer-events-none absolute top-0 left-0 h-[1274px] w-[907px]">
      <g fill="none" stroke="#f26a10" strokeWidth="2.3">
        <path d="M170 563 L359 831 V868Z" />
        <path d="M962 822 L629 1158 H660Z" />
      </g>
      <g fill="none" stroke="#f26a10" strokeWidth="3">
        <path d="M400 876 L322 942 M478 877 L504 989 M515 880 L626 895" />
        <path d="M580 1144 L592 1246 M513 1259 L439 1274 M675 1231 L758 1267 M677 1270 L733 1356 M669 1305 L674 1393 M598 1315 L588 1379" />
      </g>
    </svg>
  );
}

function Emblem() {
  return (
    <svg viewBox="-18 -18 36 36" className="size-9">
      <circle r="15.5" fill="#fff" stroke="#b87808" strokeWidth="4.6" />
      <circle r="15.5" fill="none" stroke="#f4b93a" strokeWidth="2.4" />
      {[0, 90, 180, 270].map((a) => (
        <g key={a} transform={`rotate(${a})`}>
          <path d="M-2 -13.5 H2 V-9 H-2Z" fill="#dc9a1c" />
          <path d="M-3.5 -10 H3.5 L1.5 -3 H-1.5Z" fill="#fff" stroke="#c88810" strokeWidth="1" />
          <path d="M-3 -3 L-9 -9" stroke="#dc9a1c" strokeWidth="3.5" />
        </g>
      ))}
      <circle r="4.5" fill="#e0a024" />
      <circle r="2.5" fill="#f8d070" stroke="#a86a04" strokeWidth="0.8" />
    </svg>
  );
}

export default function App() {
  return (
    <div className="relative min-h-screen bg-white pt-28 pr-[170px] pb-[67px] pl-[113px] font-['Liberation_Sans',Arial,sans-serif]">
      <header className="border-t-2 border-[#000096]" />

      <main className="relative mt-[111px] flex">
        <ChannelStrip />
        <div className="flex min-w-0 flex-1 flex-col pt-[182px]">
          <ConsoleDrawing />
          <div className="mt-[87px] flex justify-between">
            <div>
              <div className="flex items-start gap-[11px] pl-[170px]">
                <DirectOutPanel />
                <div className="pt-[3px]"><Locator /></div>
              </div>
              <div className="mt-[251px] flex items-start gap-[11px] pl-[286px]">
                <DirectOutputPanel />
                <Locator />
              </div>
            </div>
            <OutputStrip />
          </div>
        </div>
        <Leaders />
      </main>

      <svg viewBox="0 0 56 112" className="absolute top-[738px] right-14 h-28 w-[55px]">
        <path d="M0 0 L56 56 L0 112Z" fill="#ff6a00" />
      </svg>

      <footer className="mt-[71px] border-t border-[#000096] pt-[9px]">
        <a href="#midas" aria-label="Midas" className="flex items-center gap-1">
          <Emblem />
          <span className="bg-[linear-gradient(180deg,#b87808_0px,#b87808_1px,#f6c850_2px,#c48408_5px,transparent_5px,transparent_6px,#c48408_6px,#ffdc78_8px,#c48408_11px,transparent_11px,transparent_12px,#c48408_12px,#f6c850_14px,#c48408_16px,transparent_16px,transparent_17px,#c48408_17px,#f6c850_20px,#c48408_23px,transparent_23px,transparent_24px,#c48408_24px,#ffdc78_26px,#c48408_29px,transparent_29px,transparent_30px,#c48408_30px,#f6c850_33px,#a86a04_36px)] bg-clip-text font-['DejaVu_Sans',sans-serif] text-[51px] leading-9 font-bold text-transparent">
            MIDAS
          </span>
        </a>
      </footer>
    </div>
  );
}
